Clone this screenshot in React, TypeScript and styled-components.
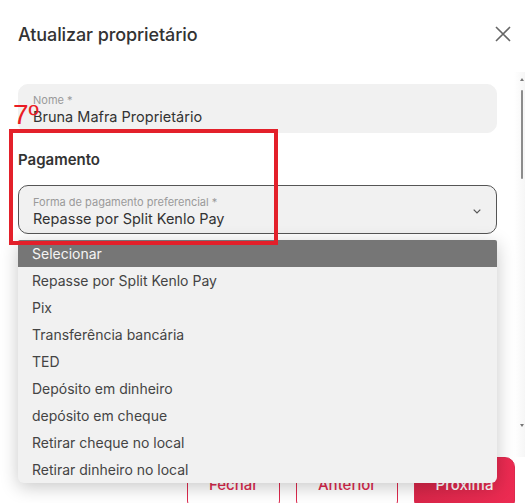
import styled, { createGlobalStyle } from "styled-components";

const GlobalStyle = createGlobalStyle`
  body {
    margin: 0;
    background: #ffffff;
    font-family: Inter, "Noto Sans", sans-serif;
    color: #333333;
  }
`;

const Page = styled.div`
  position: relative;
  width: 525px;
  height: 503px;
  overflow: hidden;
  background: #ffffff;
`;

const Header = styled.header`
  display: flex;
  justify-content: space-between;
  align-items: center;
  padding: 22px 14px 0 18px;
  height: 24px;
`;

const Title = styled.h1`
  margin: 0;
  font-size: 18px;
  font-weight: 500;
  color: #333333;
  letter-spacing: -0.1px;
`;

const CloseBtn = styled.button`
  border: none;
  background: none;
  padding: 0;
  width: 16px;
  height: 16px;
  display: flex;
  cursor: pointer;
`;

const BodyRow = styled.div`
  display: flex;
  height: 385px;
  margin-top: 26px;
`;

const Content = styled.div`
  flex: 1;
  padding: 12px 17px 0 18px;
`;

const Rail = styled.div`
  width: 10px;
  display: flex;
  flex-direction: column;
  align-items: flex-end;
  padding: 6px 1px 30px 0;
  background: linear-gradient(to right, #ffffff, #f6f6f6);
`;

const Arrow = styled.div<{ down?: boolean }>`
  width: 0;
  height: 0;
  border-left: 2px solid transparent;
  border-right: 2px solid transparent;
  ${(p) =>
    p.down ? "border-top: 3px solid #777777;" : "border-bottom: 3px solid #777777;"}
  margin-top: ${(p) => (p.down ? "auto" : "0")};
`;

const Thumb = styled.div`
  width: 2px;
  height: 89px;
  margin-top: 9px;
  margin-right: 1px;
  background: #8c8c8c;
  border-radius: 1px;
`;

const Field = styled.div<{ outlined?: boolean }>`
  position: relative;
  box-sizing: border-box;
  height: 49px;
  background: #f1f1f1;
  border-radius: 10px;
  border: 1px solid ${(p) => (p.outlined ? "#555555" : "#f1f1f1")};
  padding: ${(p) => (p.outlined ? "9px 14px 0 14px" : "8px 14px 0 14px")};
  display: flex;
  align-items: center;
`;

const FieldText = styled.div`
  flex: 1;
  display: flex;
  flex-direction: column;
  align-self: flex-start;
`;

const Label = styled.span`
  font-size: 11px;
  line-height: 14px;
  color: #9a9a9a;
`;

const Value = styled.span`
  font-size: 14.5px;
  line-height: 20px;
  color: #333333;
`;

const Chevron = styled.svg`
  margin: -6px 1px 0 0;
`;

const Section = styled.h2`
  margin: 17px 0 15px 0;
  font-size: 15px;
  line-height: 20px;
  font-weight: 600;
  color: #333333;
`;

const SelectWrap = styled.div`
  position: relative;
`;

const Menu = styled.ul`
  position: absolute;
  top: calc(100% + 6px);
  left: 0;
  right: 0;
  margin: 0;
  padding: 0;
  list-style: none;
  background: #f1f1f1;
  border-radius: 2px 2px 6px 6px;
  box-shadow: 0 4px 18px rgba(0, 0, 0, 0.22);
  overflow: hidden;
  z-index: 5;
`;

const Option = styled.li<{ active?: boolean }>`
  height: 27px;
  display: flex;
  align-items: center;
  padding-left: 14px;
  font-size: 14px;
  color: ${(p) => (p.active ? "#f4f4f4" : "#444444")};
  background: ${(p) => (p.active ? "#767676" : "transparent")};
`;

const Footer = styled.footer`
  display: flex;
  justify-content: flex-end;
  gap: 16px;
  padding: 0 10px 0 0;
`;

const Btn = styled.button<{ primary?: boolean; w: number }>`
  width: ${(p) => p.w}px;
  height: 54px;
  border-radius: 10px;
  font-family: inherit;
  font-size: 15px;
  font-weight: 500;
  cursor: pointer;
  border: 1.5px solid #dd2a4e;
  color: ${(p) => (p.primary ? "#ffffff" : "#dd2a4e")};
  background: ${(p) =>
    p.primary ? "linear-gradient(90deg, #d92649, #ec2b52)" : "#ffffff"};
`;

const Marker = styled.div`
  position: absolute;
  left: 9px;
  top: 129px;
  width: 269px;
  height: 116px;
  box-sizing: border-box;
  border: 4.5px solid #e3202a;
  z-index: 10;
  pointer-events: none;
`;

const MarkerNum = styled.span`
  position: absolute;
  left: 13px;
  top: 100px;
  font-family: "Liberation Sans", Arial, sans-serif;
  font-size: 28px;
  line-height: 30px;
  color: #ea1c24;
  z-index: 10;
`;

const options = [
  "Selecionar",
  "Repasse por Split Kenlo Pay",
  "Pix",
  "Transferência bancária",
  "TED",
  "Depósito em dinheiro",
  "depósito em cheque",
  "Retirar cheque no local",
  "Retirar dinheiro no local",
];

function App() {
  return (
    <Page>
      <GlobalStyle />
      <Header>
        <Title>Atualizar proprietário</Title>
        <CloseBtn aria-label="Fechar">
          <svg width="16" height="16" viewBox="0 0 16 16">
            <path d="M1 1 L15 15 M15 1 L1 15" stroke="#666666" strokeWidth="1.6" fill="none" />
          </svg>
        </CloseBtn>
      </Header>
      <BodyRow>
        <Content>
          <Field>
            <FieldText>
              <Label>Nome *</Label>
              <Value>Bruna Mafra Proprietário</Value>
            </FieldText>
          </Field>
          <Section>Pagamento</Section>
          <SelectWrap>
            <Field outlined>
              <FieldText>
                <Label>Forma de pagamento preferencial *</Label>
                <Value>Repasse por Split Kenlo Pay</Value>
              </FieldText>
              <Chevron width="8" height="5" viewBox="0 0 8 5">
                <path d="M0.7 0.7 L4 4 L7.3 0.7" stroke="#555555" strokeWidth="1.2" fill="none" />
              </Chevron>
            </Field>
            <Menu>
              {options.map((o, i) => (
                <Option key={o} active={i === 0}>
                  {o}
                </Option>
              ))}
            </Menu>
          </SelectWrap>
        </Content>
        <Rail>
          <Arrow />
          <Thumb />
          <Arrow down />
        </Rail>
      </BodyRow>
      <Footer>
        <Btn w={93}>Fechar</Btn>
        <Btn w={102}>Anterior</Btn>
        <Btn w={101} primary>
          Próxima
        </Btn>
      </Footer>
      <MarkerNum>7º</MarkerNum>
      <Marker />
    </Page>
  );
}

export default App;
